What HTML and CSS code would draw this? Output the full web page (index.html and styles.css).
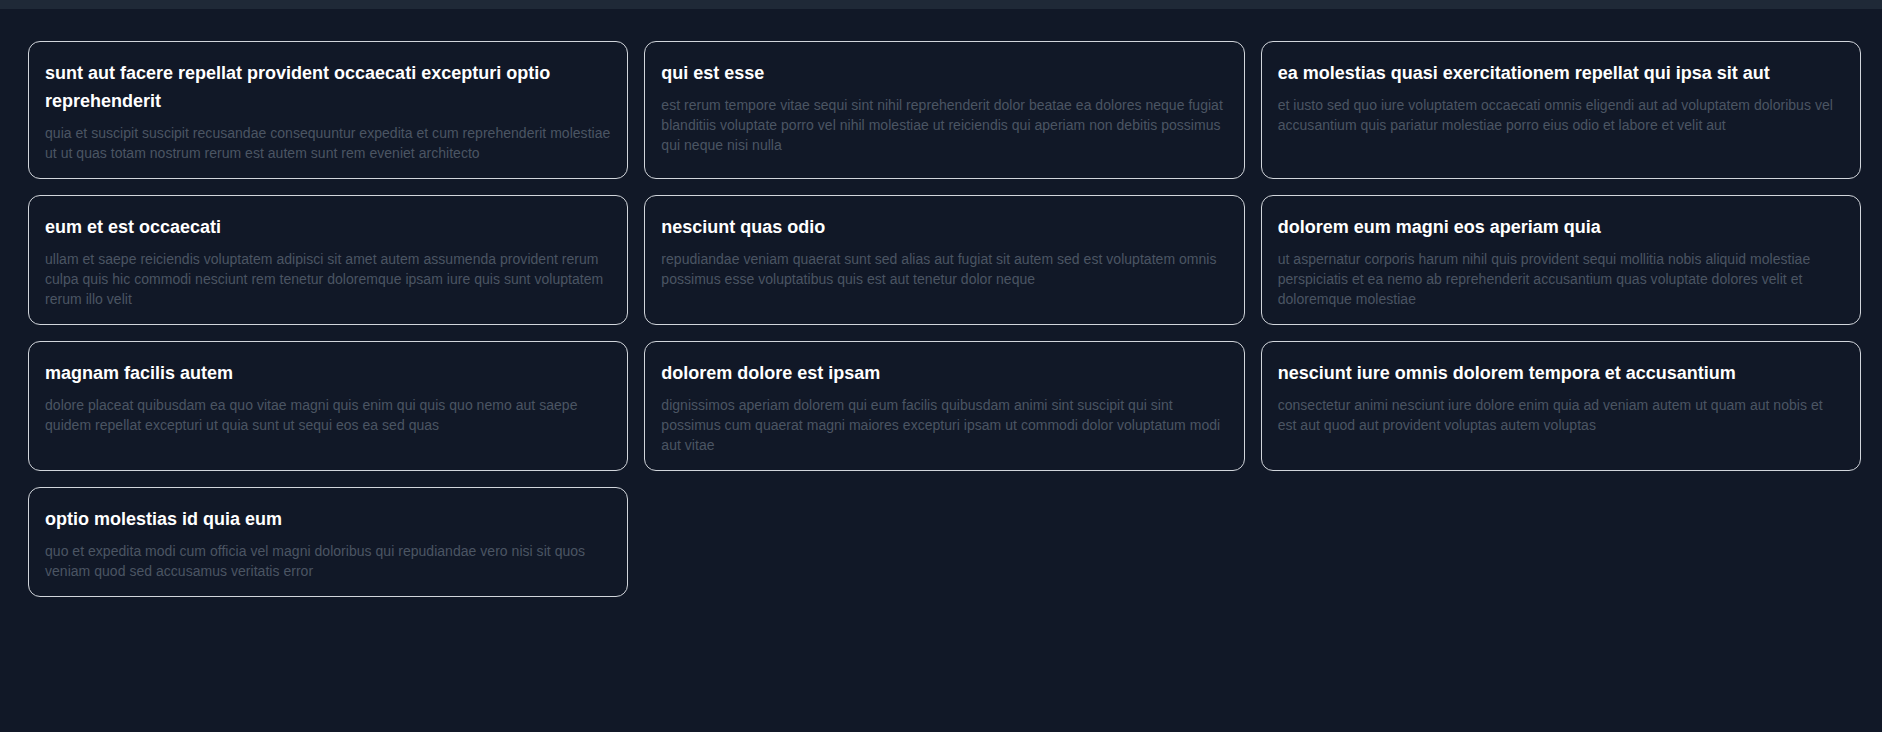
FILE: index.html
```html
<!DOCTYPE html>
<html>
<head>
<meta charset="utf-8">
<link rel="stylesheet" href="styles.css">
</head>
<body>
<div class="topbar"></div>
<main class="grid">
  <div class="card"><h2>sunt aut facere repellat provident occaecati excepturi optio reprehenderit</h2><p>quia et suscipit suscipit recusandae consequuntur expedita et cum reprehenderit molestiae ut ut quas totam nostrum rerum est autem sunt rem eveniet architecto</p></div>
  <div class="card"><h2>qui est esse</h2><p>est rerum tempore vitae sequi sint nihil reprehenderit dolor beatae ea dolores neque fugiat blanditiis voluptate porro vel nihil molestiae ut reiciendis qui aperiam non debitis possimus qui neque nisi nulla</p></div>
  <div class="card"><h2>ea molestias quasi exercitationem repellat qui ipsa sit aut</h2><p>et iusto sed quo iure voluptatem occaecati omnis eligendi aut ad voluptatem doloribus vel accusantium quis pariatur molestiae porro eius odio et labore et velit aut</p></div>
  <div class="card"><h2>eum et est occaecati</h2><p>ullam et saepe reiciendis voluptatem adipisci sit amet autem assumenda provident rerum culpa quis hic commodi nesciunt rem tenetur doloremque ipsam iure quis sunt voluptatem rerum illo velit</p></div>
  <div class="card"><h2>nesciunt quas odio</h2><p>repudiandae veniam quaerat sunt sed alias aut fugiat sit autem sed est voluptatem omnis possimus esse voluptatibus quis est aut tenetur dolor neque</p></div>
  <div class="card"><h2>dolorem eum magni eos aperiam quia</h2><p>ut aspernatur corporis harum nihil quis provident sequi mollitia nobis aliquid molestiae perspiciatis et ea nemo ab reprehenderit accusantium quas voluptate dolores velit et doloremque molestiae</p></div>
  <div class="card"><h2>magnam facilis autem</h2><p>dolore placeat quibusdam ea quo vitae magni quis enim qui quis quo nemo aut saepe quidem repellat excepturi ut quia sunt ut sequi eos ea sed quas</p></div>
  <div class="card"><h2>dolorem dolore est ipsam</h2><p>dignissimos aperiam dolorem qui eum facilis quibusdam animi sint suscipit qui sint possimus cum quaerat magni maiores excepturi ipsam ut commodi dolor voluptatum modi aut vitae</p></div>
  <div class="card"><h2>nesciunt iure omnis dolorem tempora et accusantium</h2><p>consectetur animi nesciunt iure dolore enim quia ad veniam autem ut quam aut nobis et est aut quod aut provident voluptas autem voluptas</p></div>
  <div class="card"><h2>optio molestias id quia eum</h2><p>quo et expedita modi cum officia vel magni doloribus qui repudiandae vero nisi sit quos veniam quod sed accusamus veritatis error</p></div>
</main>
</body>
</html>
```
FILE: styles.css
```css
html, body { margin: 0; padding: 0; background: #111827; }
body { font-family: "Liberation Sans", Arial, sans-serif; }
.topbar { height: 9px; background: #1f2937; }
.grid { display: grid; grid-template-columns: repeat(3, 1fr); gap: 16px; padding: 32px 21px 0 28px; align-items: stretch; }
.card { border: 1px solid #d1d5db; border-radius: 12px; padding: 17px 16px 15px; }
.card h2 { margin: 0 0 8px; font-size: 18px; line-height: 28px; font-weight: 700; color: #fff; }
.card p { margin: 0; font-size: 14px; line-height: 20px; letter-spacing: 0.03px; color: #4b5563; }
```
